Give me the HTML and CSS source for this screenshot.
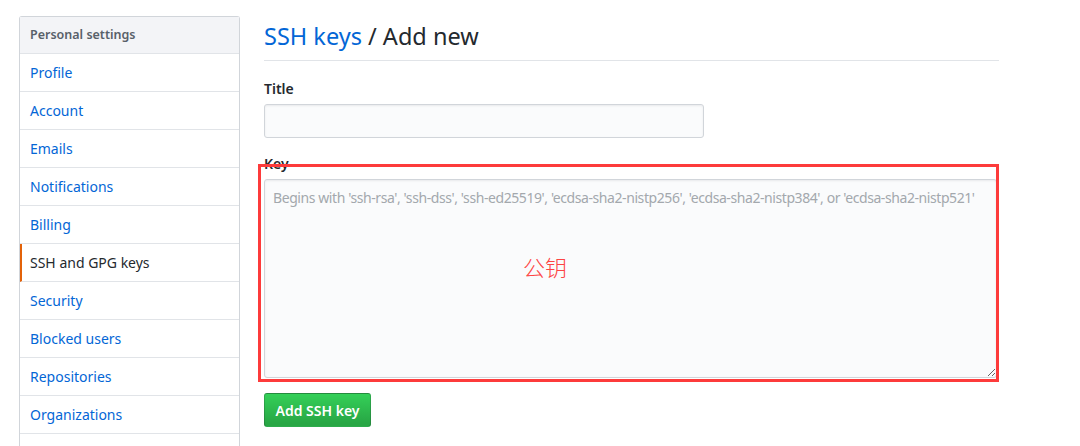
FILE: index.html
```html
<!DOCTYPE html>
<html lang="zh-CN">
<head>
  <meta charset="UTF-8">
  <title>SSH keys / Add new</title>
  <link rel="stylesheet" href="styles.css">
</head>
<body>

  <div class="page">
    <nav class="menu">
      <div class="menu-heading">Personal settings</div>
      <a class="menu-item" href="#">Profile</a>
      <a class="menu-item" href="#">Account</a>
      <a class="menu-item" href="#">Emails</a>
      <a class="menu-item" href="#">Notifications</a>
      <a class="menu-item" href="#">Billing</a>
      <a class="menu-item selected" href="#">SSH and GPG keys</a>
      <a class="menu-item" href="#">Security</a>
      <a class="menu-item" href="#">Blocked users</a>
      <a class="menu-item" href="#">Repositories</a>
      <a class="menu-item" href="#">Organizations</a>
      <div class="menu-item menu-rest"></div>
    </nav>

    <div class="main">
      <h2 class="subhead"><a href="#">SSH keys</a> / Add new</h2>

      <form class="key-form">
        <div class="form-group">
          <label for="title">Title</label>
          <input class="form-control title-input" id="title" type="text">
        </div>

        <div class="form-group key-group">
          <label for="key">Key</label>
          <textarea class="form-control key-input" id="key" placeholder="Begins with 'ssh-rsa', 'ssh-dss', 'ssh-ed25519', 'ecdsa-sha2-nistp256', 'ecdsa-sha2-nistp384', or 'ecdsa-sha2-nistp521'"></textarea>
          <!-- annotation drawn on the screenshot -->
          <div class="mark"></div>
          <div class="mark-text">公钥</div>
        </div>

        <button class="btn-primary" type="button">Add SSH key</button>
      </form>
    </div>
  </div>

</body>
</html>
```

FILE: styles.css
```css
body {
  margin: 0;
  background: #fff;
  color: #24292e;
  font-family: "Noto Sans", "Noto Sans CJK SC", sans-serif;
  font-size: 14px;
  line-height: 1.5;
  height: 446px;
  overflow: hidden;
}

a {
  color: #0366d6;
  text-decoration: none;
}

.page {
  display: flex;
  gap: 24px;
  padding: 16px 0 0 19px;
}

.menu {
  width: 219px;
  flex-shrink: 0;
  border: 1px solid #d1d5da;
  border-bottom: none;
  border-radius: 3px 3px 0 0;
  display: flex;
  flex-direction: column;
}

.menu-heading {
  padding: 8px 10px;
  background: #f3f4f7;
  color: #586069;
  font-size: 12.5px;
  font-weight: 600;
  line-height: 20px;
  border-bottom: 1px solid #e1e4e8;
}

.menu-item {
  padding: 8px 10px;
  line-height: 21px;
  border-bottom: 1px solid #e1e4e8;
}

.menu-item.selected {
  color: #24292e;
  padding-left: 8px;
  border-left: 2px solid #e36209;
}

.menu-rest {
  height: 21px;
}

.main {
  width: 735px;
}

.subhead {
  margin: 4px 0 0;
  padding-bottom: 8px;
  border-bottom: 1px solid #e1e4e8;
  font-size: 23.5px;
  font-weight: 400;
  line-height: 32px;
}

.key-form {
  padding-top: 17px;
}

.form-group {
  margin-bottom: 15px;
}

.form-group label {
  display: block;
  font-weight: 600;
  line-height: 21px;
  margin-bottom: 5px;
}

.form-control {
  box-sizing: border-box;
  display: block;
  background: #fafbfc;
  border: 1px solid #d1d5da;
  border-radius: 3px;
  box-shadow: inset 0 1px 2px rgba(27, 31, 35, 0.075);
  font-family: inherit;
  font-size: 14px;
  color: #24292e;
}

.title-input {
  width: 440px;
  height: 34px;
}

.key-input {
  width: 733px;
  height: 199px;
  padding: 8px 8px;
  line-height: 20px;
  letter-spacing: -0.42px;
  resize: both;
}

.key-input::placeholder {
  color: #a3a8ad;
}

.key-group {
  position: relative;
}

.mark {
  position: absolute;
  left: -6px;
  top: 11px;
  width: 735px;
  height: 212px;
  border: 3px solid #fd3b3b;
  pointer-events: none;
}

.mark-text {
  position: absolute;
  left: 259px;
  top: 99px;
  color: #fd4444;
  font-size: 22px;
  font-weight: 300;
  line-height: 30px;
  pointer-events: none;
}

.btn-primary {
  width: 107px;
  height: 34px;
  padding: 0;
  border: 1px solid rgba(27, 31, 35, 0.2);
  border-radius: 3px;
  background: linear-gradient(#34d058, #28a745 90%);
  color: #fff;
  font-family: inherit;
  font-size: 14px;
  font-weight: 600;
  cursor: pointer;
}
```
